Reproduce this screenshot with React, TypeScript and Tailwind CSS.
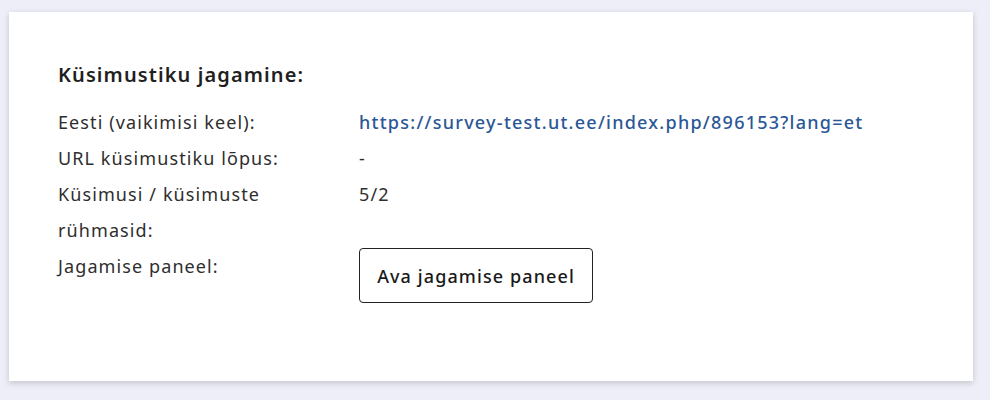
const rows: { label: string; value: React.ReactNode }[] = [
  {
    label: 'Eesti (vaikimisi keel):',
    value: (
      <a href="#" className="font-medium tracking-[1.25px] text-[#2b5797]">
        https://survey-test.ut.ee/index.php/896153?lang=et
      </a>
    ),
  },
  { label: 'URL küsimustiku lõpus:', value: '-' },
  { label: 'Küsimusi / küsimuste rühmasid:', value: '5/2' },
  {
    label: 'Jagamise paneel:',
    value: (
      <button className="h-[55px] w-[234px] rounded-[4px] border border-[#222] font-medium text-[#1a1a1a]">
        Ava jagamise paneel
      </button>
    ),
  },
]

export default function App() {
  return (
    <div className="min-h-[400px] bg-[#eeeef8] pt-[12px] pl-[9px] pr-[17px] font-['Noto_Sans',sans-serif] tracking-[1.1px]">
      <div className="h-[369px] w-[964px] bg-white px-[49px] pt-[48px] shadow-[0_2px_6px_rgba(0,0,0,0.18)]">
        <h2 className="mb-[14px] text-[20px] leading-[30px] font-semibold text-[#1f1f1f]">
          Küsimustiku jagamine:
        </h2>
        <div className="flex flex-col">
          {rows.map((r) => (
            <div key={r.label} className="flex text-[18px] leading-[36px] text-[#2e2e2e]">
              <div className="w-[240px] shrink-0">{r.label}</div>
              <div className="ml-[61px]">{r.value}</div>
            </div>
          ))}
        </div>
      </div>
    </div>
  )
}
